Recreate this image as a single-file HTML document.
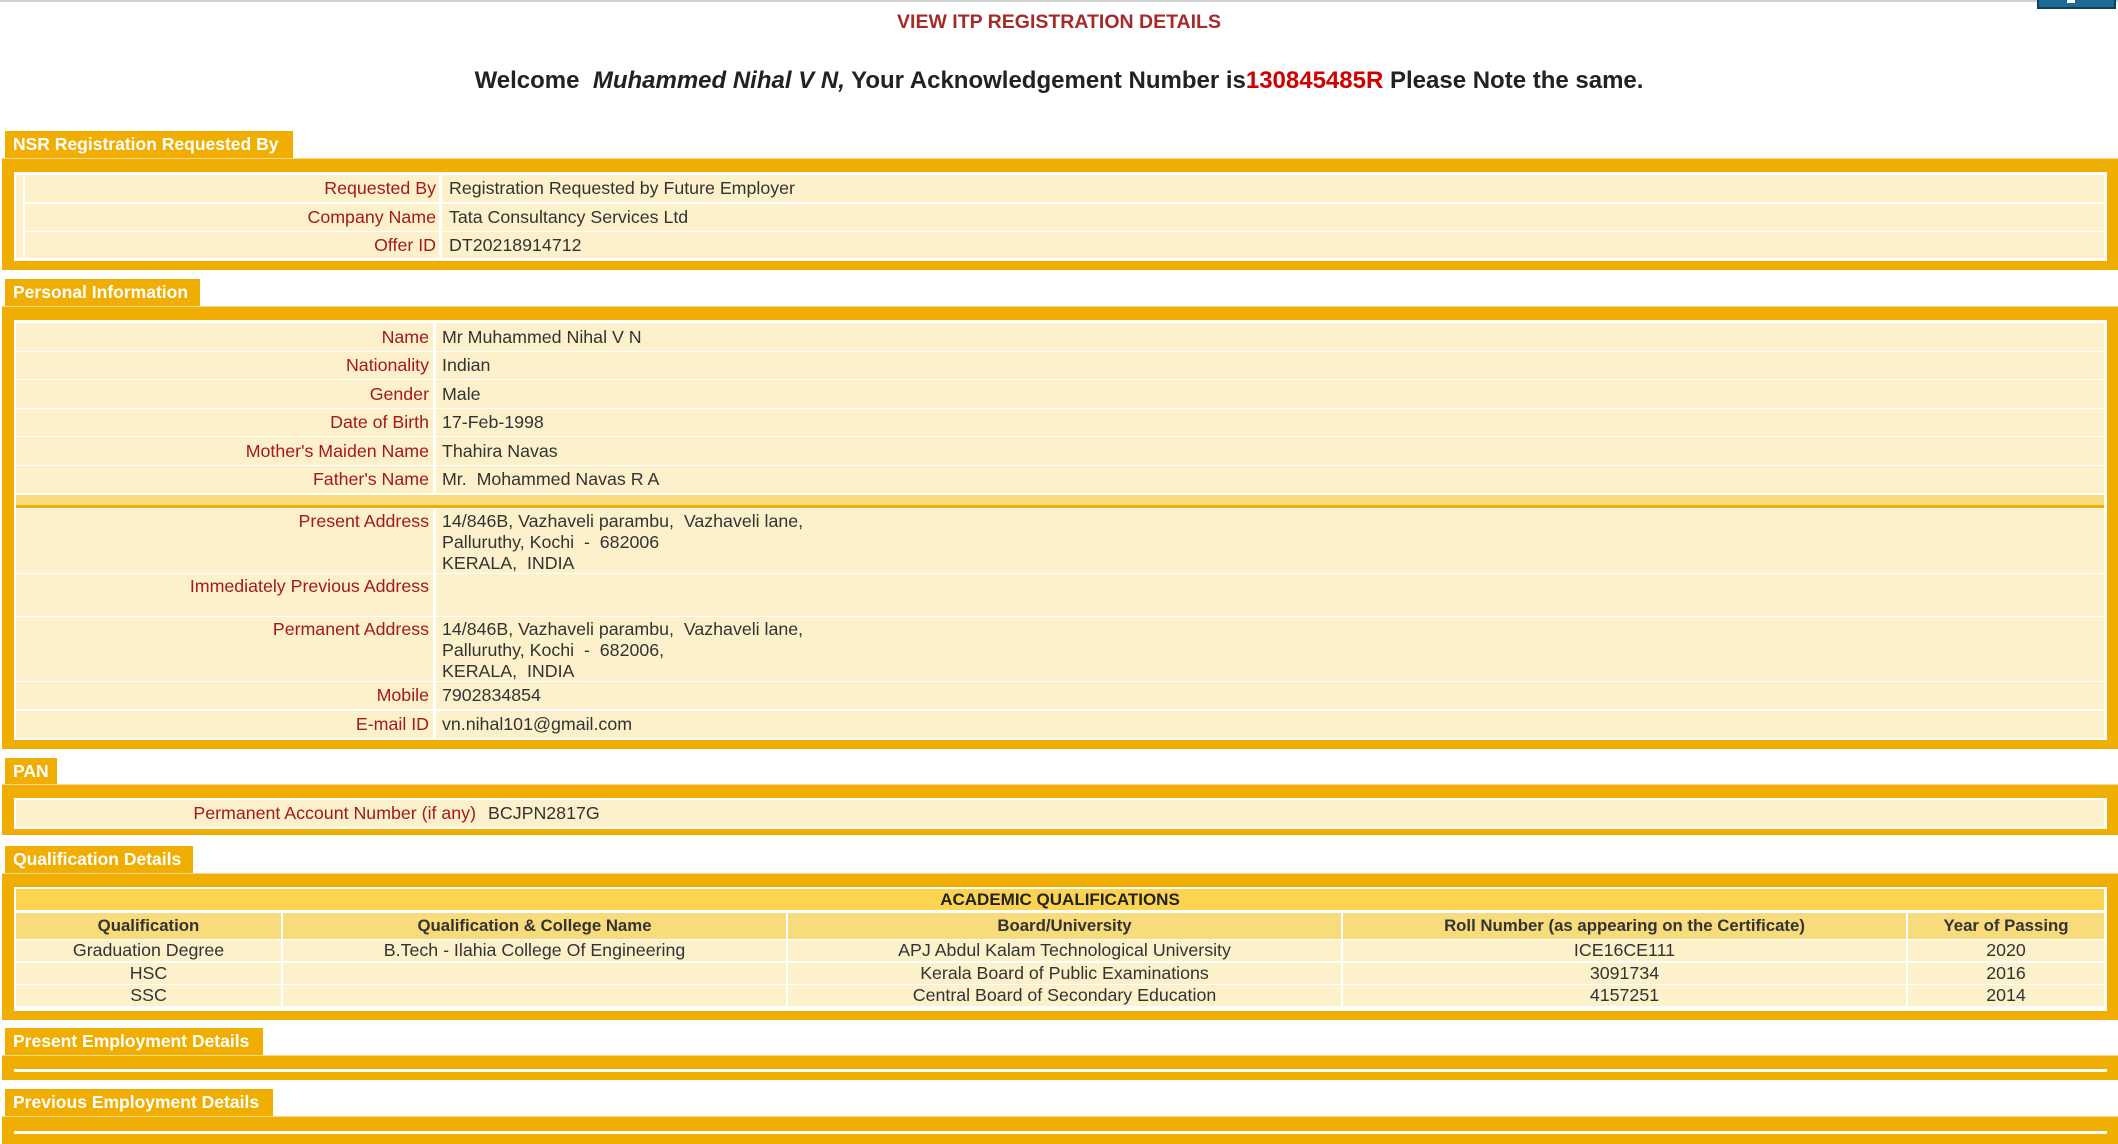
<!DOCTYPE html>
<html><head><meta charset="utf-8">
<style>
*{margin:0;padding:0;box-sizing:border-box}
body{width:2118px;height:1144px;background:#fff;font-family:"Liberation Sans",Arial,sans-serif;position:relative;overflow:hidden;color:#333}
.a{position:absolute}
.tab{position:absolute;left:5px;background:#F0AE03;color:#fff;font-weight:bold;font-size:17.5px;padding-left:8px;line-height:27px;height:27px;white-space:nowrap}
.box{position:absolute;left:2px;width:2116px;background:#F0AE03;border-top:1px solid #f5d890}
.w{position:absolute;background:#fff}
.row{position:absolute;left:16px;width:2088px;background:#FDF1CB;font-size:17.8px}
.lab{position:absolute;left:0;text-align:right;color:#A3191C;white-space:nowrap}
.val{position:absolute;white-space:nowrap;color:#333}
.div{position:absolute;top:0;bottom:0;width:3px;background:#fff}
.q{position:absolute;text-align:center;font-size:17.8px;white-space:nowrap}
</style></head><body>
<div class="a" style="left:0;top:0;width:2118px;height:2px;background:#cfcfcf"></div>
<div class="a" style="left:2037px;top:0;width:79px;height:9px;background:#1d6b95;border:2px solid #0f3f5e;border-top:none"></div>
<div class="a" style="left:2067px;top:0;width:8px;height:3px;background:#fff"></div>

<div class="a" style="left:0;width:2118px;top:11px;text-align:center;color:#A52A2A;font-weight:bold;font-size:19.5px">VIEW ITP REGISTRATION DETAILS</div>
<div class="a" style="left:0;width:2118px;top:67px;text-align:center;color:#222;font-weight:bold;font-size:24px;white-space:pre">Welcome  <i>Muhammed Nihal V N,</i> Your Acknowledgement Number is<span style="color:#D00000">130845485R</span> Please Note the same.</div>

<!-- NSR -->
<div class="tab" style="top:131px;width:288px">NSR Registration Requested By</div>
<div class="box" style="top:158px;height:112px"></div>
<div class="w" style="left:14px;top:172px;width:2093px;height:89px"></div>
<div class="row" style="left:16px;width:7px;top:175px;height:83px"></div>
<div class="row" style="left:25px;width:2079px;top:175px;height:27px;line-height:27px"><span class="lab" style="width:411px">Requested By</span><span class="div" style="left:414px"></span><span class="val" style="left:424px">Registration Requested by Future Employer</span></div>
<div class="row" style="left:25px;width:2079px;top:204px;height:27px;line-height:27px"><span class="lab" style="width:411px">Company Name</span><span class="div" style="left:414px"></span><span class="val" style="left:424px">Tata Consultancy Services Ltd</span></div>
<div class="row" style="left:25px;width:2079px;top:232px;height:26px;line-height:26px"><span class="lab" style="width:411px">Offer ID</span><span class="div" style="left:414px"></span><span class="val" style="left:424px">DT20218914712</span></div>

<!-- Personal -->
<div class="tab" style="top:279px;width:195px">Personal Information</div>
<div class="box" style="top:306px;height:443px"></div>
<div class="w" style="left:14px;top:320px;width:2093px;height:420px"></div>
<div class="row" style="top:323px;height:28px;line-height:28px"><span class="lab" style="width:413px">Name</span><span class="div" style="left:417px"></span><span class="val" style="left:426px">Mr Muhammed Nihal V N</span></div>
<div class="row" style="top:352px;height:27px;line-height:27px"><span class="lab" style="width:413px">Nationality</span><span class="div" style="left:417px"></span><span class="val" style="left:426px">Indian</span></div>
<div class="row" style="top:380px;height:28px;line-height:28px"><span class="lab" style="width:413px">Gender</span><span class="div" style="left:417px"></span><span class="val" style="left:426px">Male</span></div>
<div class="row" style="top:409px;height:27px;line-height:27px"><span class="lab" style="width:413px">Date of Birth</span><span class="div" style="left:417px"></span><span class="val" style="left:426px">17-Feb-1998</span></div>
<div class="row" style="top:437px;height:28px;line-height:28px"><span class="lab" style="width:413px">Mother's Maiden Name</span><span class="div" style="left:417px"></span><span class="val" style="left:426px">Thahira Navas</span></div>
<div class="row" style="top:466px;height:27px;line-height:27px"><span class="lab" style="width:413px">Father's Name</span><span class="div" style="left:417px"></span><span class="val" style="left:426px;white-space:pre">Mr.  Mohammed Navas R A</span></div>
<div class="a" style="left:16px;top:495px;width:2088px;height:10px;background:#F8DC7C"></div>
<div class="a" style="left:16px;top:505px;width:2088px;height:3px;background:#F0AE03"></div>
<div class="row" style="top:509px;height:64px;line-height:21px"><span class="lab" style="width:413px;top:2px">Present Address</span><span class="div" style="left:417px"></span><span class="val" style="left:426px;top:2px;white-space:pre">14/846B, Vazhaveli parambu,  Vazhaveli lane,
Palluruthy, Kochi  -  682006
KERALA,  INDIA</span></div>
<div class="row" style="top:574px;height:42px;line-height:21px"><span class="lab" style="width:413px;top:2px">Immediately Previous Address</span><span class="div" style="left:417px"></span></div>
<div class="row" style="top:617px;height:64px;line-height:21px"><span class="lab" style="width:413px;top:2px">Permanent Address</span><span class="div" style="left:417px"></span><span class="val" style="left:426px;top:2px;white-space:pre">14/846B, Vazhaveli parambu,  Vazhaveli lane,
Palluruthy, Kochi  -  682006,
KERALA,  INDIA</span></div>
<div class="row" style="top:682px;height:27px;line-height:27px"><span class="lab" style="width:413px">Mobile</span><span class="div" style="left:417px"></span><span class="val" style="left:426px">7902834854</span></div>
<div class="row" style="top:711px;height:27px;line-height:27px"><span class="lab" style="width:413px">E-mail ID</span><span class="div" style="left:417px"></span><span class="val" style="left:426px">vn.nihal101@gmail.com</span></div>

<!-- PAN -->
<div class="tab" style="top:758px;width:52px">PAN</div>
<div class="box" style="top:784px;height:51px"></div>
<div class="w" style="left:14px;top:798px;width:2093px;height:31px"></div>
<div class="row" style="top:800px;height:27px;line-height:27px"><span class="lab" style="width:460px">Permanent Account Number (if any)</span><span class="val" style="left:472px">BCJPN2817G</span></div>

<!-- Qualification -->
<div class="tab" style="top:846px;width:188px">Qualification Details</div>
<div class="box" style="top:873px;height:147px"></div>
<div class="w" style="left:14px;top:887px;width:2093px;height:124px"></div>
<div class="a" style="left:16px;top:889px;width:2088px;height:21px;background:#FCD451;text-align:center;font-weight:bold;font-size:17px;line-height:22px;color:#222">ACADEMIC QUALIFICATIONS</div>
<div class="a" style="left:16px;top:913px;width:2088px;height:26px;background:#F8DC7C"></div>
<div class="a" style="left:16px;top:940px;width:2088px;height:21px;background:#FDF1CB"></div>
<div class="a" style="left:16px;top:963px;width:2088px;height:21px;background:#FDF1CB"></div>
<div class="a" style="left:16px;top:985px;width:2088px;height:21px;background:#FDF1CB"></div>
<div class="a" style="left:281px;top:913px;width:2px;height:93px;background:#fff"></div>
<div class="a" style="left:786px;top:913px;width:2px;height:93px;background:#fff"></div>
<div class="a" style="left:1341px;top:913px;width:2px;height:93px;background:#fff"></div>
<div class="a" style="left:1906px;top:913px;width:2px;height:93px;background:#fff"></div>
<div class="q" style="left:16px;width:265px;top:913px;line-height:26px;font-weight:bold;font-size:16.8px">Qualification</div>
<div class="q" style="left:283px;width:503px;top:913px;line-height:26px;font-weight:bold;font-size:16.8px">Qualification &amp; College Name</div>
<div class="q" style="left:788px;width:553px;top:913px;line-height:26px;font-weight:bold;font-size:16.8px">Board/University</div>
<div class="q" style="left:1343px;width:563px;top:913px;line-height:26px;font-weight:bold;font-size:16.8px">Roll Number (as appearing on the Certificate)</div>
<div class="q" style="left:1908px;width:196px;top:913px;line-height:26px;font-weight:bold;font-size:16.8px">Year of Passing</div>

<div class="q" style="left:16px;width:265px;top:940px;line-height:21px">Graduation Degree</div>
<div class="q" style="left:283px;width:503px;top:940px;line-height:21px">B.Tech - Ilahia College Of Engineering</div>
<div class="q" style="left:788px;width:553px;top:940px;line-height:21px">APJ Abdul Kalam Technological University</div>
<div class="q" style="left:1343px;width:563px;top:940px;line-height:21px">ICE16CE111</div>
<div class="q" style="left:1908px;width:196px;top:940px;line-height:21px">2020</div>

<div class="q" style="left:16px;width:265px;top:963px;line-height:21px">HSC</div>
<div class="q" style="left:788px;width:553px;top:963px;line-height:21px">Kerala Board of Public Examinations</div>
<div class="q" style="left:1343px;width:563px;top:963px;line-height:21px">3091734</div>
<div class="q" style="left:1908px;width:196px;top:963px;line-height:21px">2016</div>

<div class="q" style="left:16px;width:265px;top:985px;line-height:21px">SSC</div>
<div class="q" style="left:788px;width:553px;top:985px;line-height:21px">Central Board of Secondary Education</div>
<div class="q" style="left:1343px;width:563px;top:985px;line-height:21px">4157251</div>
<div class="q" style="left:1908px;width:196px;top:985px;line-height:21px">2014</div>

<!-- Present employment -->
<div class="tab" style="top:1028px;width:258px">Present Employment Details</div>
<div class="box" style="top:1055px;height:25px"></div>
<div class="w" style="left:14px;top:1069px;width:2093px;height:3px"></div>

<!-- Previous employment -->
<div class="tab" style="top:1089px;width:268px">Previous Employment Details</div>
<div class="box" style="top:1116px;height:28px"></div>
<div class="w" style="left:14px;top:1131px;width:2093px;height:3px"></div>
</body></html>
